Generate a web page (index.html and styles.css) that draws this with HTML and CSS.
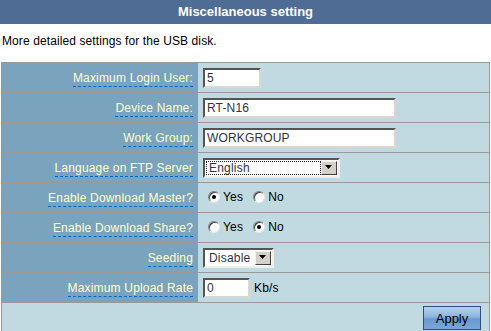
FILE: index.html
```html
<!DOCTYPE html>
<html>
<head>
<meta charset="utf-8">
<link rel="stylesheet" href="styles.css">
</head>
<body>
<div class="header">Miscellaneous setting</div>
<p class="desc">More detailed settings for the USB disk.</p>
<table class="form">
  <tr>
    <th><span class="hint">Maximum Login User:</span></th>
    <td><input class="txt w-s" type="text" value="5"></td>
  </tr>
  <tr>
    <th><span class="hint">Device Name:</span></th>
    <td><input class="txt w-l" type="text" value="RT-N16"></td>
  </tr>
  <tr>
    <th><span class="hint">Work Group:</span></th>
    <td><input class="txt w-l" type="text" value="WORKGROUP"></td>
  </tr>
  <tr>
    <th><span class="hint">Language on FTP Server</span></th>
    <td>
      <span class="combo combo-lang">
        <span class="combo-text focus">English</span>
        <span class="combo-btn"><svg width="8" height="5" viewBox="0 0 8 5"><path d="M0 0H7L3.5 4Z" fill="#000"/></svg></span>
      </span>
    </td>
  </tr>
  <tr>
    <th><span class="hint">Enable Download Master?</span></th>
    <td>
      <span class="radios">
        <span class="radio on"></span><span class="rlabel">Yes</span>
        <span class="radio"></span><span class="rlabel">No</span>
      </span>
    </td>
  </tr>
  <tr>
    <th><span class="hint">Enable Download Share?</span></th>
    <td>
      <span class="radios">
        <span class="radio"></span><span class="rlabel">Yes</span>
        <span class="radio on"></span><span class="rlabel">No</span>
      </span>
    </td>
  </tr>
  <tr>
    <th><span class="hint">Seeding</span></th>
    <td>
      <span class="combo combo-seed">
        <span class="combo-text">Disable</span>
        <span class="combo-btn"><svg width="8" height="5" viewBox="0 0 8 5"><path d="M0 0H7L3.5 4Z" fill="#000"/></svg></span>
      </span>
    </td>
  </tr>
  <tr>
    <th><span class="hint">Maximum Upload Rate</span></th>
    <td><input class="txt w-m" type="text" value="0"><span class="unit">Kb/s</span></td>
  </tr>
  <tr>
    <td class="actions" colspan="2"><button class="apply" type="button">Apply</button></td>
  </tr>
</table>
</body>
</html>
```
FILE: styles.css
```css
html, body {
  margin: 0;
  padding: 0;
  background: #fff;
  font-family: "Liberation Sans", Arial, sans-serif;
  font-size: 12px;
  color: #000;
}
.header {
  height: 24px;
  line-height: 24px;
  background: #4f6d94;
  color: #fff;
  font-weight: bold;
  font-size: 13px;
  text-align: center;
}
.desc {
  margin: 10px 0 14px 2px;
  line-height: 14px;
  letter-spacing: 0.1px;
}
.form {
  margin-left: 1px;
  width: 489px;
  border-collapse: collapse;
  border: 1px solid #999;
}
.form th, .form td {
  border: 1px solid #999;
  height: 29px;
  padding: 0;
  box-sizing: border-box;
}
.form tr { height: 30px; }
.form th {
  width: 196px;
  background: #7aa3bd;
  color: #ffffcc;
  font-weight: normal;
  text-align: right;
  padding-right: 4px;
  letter-spacing: 0.18px;
}
.form td {
  background: #c1d9e1;
  padding-left: 5px;
  vertical-align: middle;
}
.hint {
  border-bottom: 1px dashed #0066cc;
  padding-bottom: 1px;
}
.txt {
  box-sizing: border-box;
  height: 20px;
  border: 2px solid;
  border-color: #555 #dcd8d0 #dcd8d0 #555;
  background: #fff;
  font-family: "Liberation Sans", Arial, sans-serif;
  font-size: 12px;
  color: #334;
  padding: 0 2px;
  vertical-align: middle;
  margin: 0;
  letter-spacing: 0.15px;
}
.w-s { width: 58px; }
.w-l { width: 193px; }
.w-m { width: 47px; }
.unit { margin-left: 4px; vertical-align: middle; letter-spacing: 0.15px; }
.combo {
  display: inline-flex;
  box-sizing: border-box;
  height: 20px;
  border: 2px solid;
  border-color: #555 #f0eee8 #f0eee8 #555;
  background: #fff;
  vertical-align: middle;
  padding: 1px;
}
.combo-lang { width: 137px; }
.combo-seed { width: 71px; }
.combo-text {
  flex: 1;
  font-size: 12px;
  line-height: 14px;
  padding-left: 3px;
  color: #334;
  letter-spacing: 0.2px;
}
.combo-text.focus {
  outline: 1px dotted #222;
  outline-offset: -1px;
}
.combo-btn {
  width: 16px;
  box-sizing: border-box;
  background: #d4d0c8;
  border: 1px solid;
  border-color: #f4f2ee #404040 #404040 #f4f2ee;
  display: flex;
  align-items: center;
  justify-content: center;
}
.radios {
  display: inline-flex;
  align-items: center;
  padding-left: 5px;
}
.radio {
  width: 12px;
  height: 12px;
  box-sizing: border-box;
  border-radius: 50%;
  background: #fff;
  border: 1px solid;
  border-color: #808080 #e8e8e8 #e8e8e8 #808080;
  box-shadow: inset 1px 1px 0 #404040;
  position: relative;
}
.radio.on::after {
  content: "";
  position: absolute;
  left: 3px;
  top: 3px;
  width: 4px;
  height: 4px;
  border-radius: 50%;
  background: #000;
}
.rlabel {
  margin: 0 10px 0 3px;
  color: #000;
  letter-spacing: 0.2px;
}
.actions {
  text-align: right;
  padding: 3px 8px 0 0 !important;
  vertical-align: top !important;
}
.apply {
  display: inline-block;
  width: 58px;
  height: 24px;
  margin: 0;
  border: 1px solid #2e4d7a;
  background: linear-gradient(#b6d2ee 0%, #8db4de 45%, #6a98d0 55%, #7aa6da 100%);
  font-family: "Liberation Sans", Arial, sans-serif;
  font-size: 13px;
  color: #000;
  padding: 0;
  vertical-align: top;
}
```
